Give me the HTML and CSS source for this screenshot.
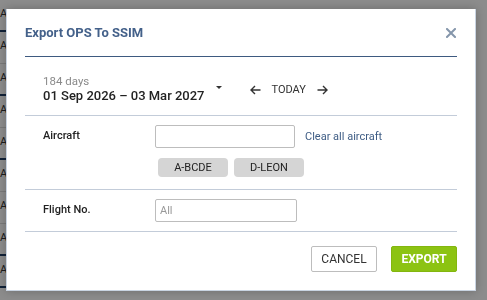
FILE: index.html
```html
<!DOCTYPE html>
<html lang="en">
<head>
    <meta charset="UTF-8">
    <meta name="viewport" content="width=device-width, initial-scale=1.0">
    <title>Export OPS To SSIM</title>
    <link rel="stylesheet" href="styles.css">
</head>
<body>

<!-- table behind the dialog -->
<div class="schedule">
    <div class="schedule-row dark">A</div>
    <div class="schedule-row">A</div>
    <div class="schedule-row dark">A</div>
    <div class="schedule-row">A</div>
    <div class="schedule-row dark">A</div>
    <div class="schedule-row">A</div>
    <div class="schedule-row">A</div>
    <div class="schedule-row dark">A</div>
    <div class="schedule-row dark">A</div>
</div>

<div class="overlay">
    <div class="modal">
        <div class="modal-header">
            <h2 class="modal-title">Export OPS To SSIM</h2>
            <button class="close-btn" type="button">
                <svg width="10" height="10" viewBox="0 0 10 10">
                    <path d="M1 1 L9 9 M9 1 L1 9" stroke="#8596ab" stroke-width="2" stroke-linecap="square"/>
                </svg>
            </button>
        </div>

        <!-- period -->
        <div class="period">
            <div class="period-range">
                <div class="period-days">184 days</div>
                <div class="period-dates">01 Sep 2026 – 03 Mar 2027</div>
            </div>
            <span class="caret"></span>
            <div class="period-nav">
                <svg width="11" height="10" viewBox="0 0 11 10">
                    <path d="M10.5 5 H1.2 M5 1 L1 5 L5 9" fill="none" stroke="#333" stroke-width="1.4"/>
                </svg>
                <span class="today">TODAY</span>
                <svg width="11" height="10" viewBox="0 0 11 10">
                    <path d="M0.5 5 H9.8 M6 1 L10 5 L6 9" fill="none" stroke="#333" stroke-width="1.4"/>
                </svg>
            </div>
        </div>

        <!-- aircraft -->
        <div class="field-row">
            <label class="field-label">Aircraft</label>
            <div class="field-body">
                <div class="field-line">
                    <input class="text-input aircraft-input" type="text">
                    <a class="clear-link" href="#">Clear all aircraft</a>
                </div>
                <div class="chips">
                    <span class="chip">A-BCDE</span>
                    <span class="chip">D-LEON</span>
                </div>
            </div>
        </div>

        <!-- flight number -->
        <div class="field-row">
            <label class="field-label">Flight No.</label>
            <div class="field-body">
                <input class="text-input flight-input" type="text" placeholder="All">
            </div>
        </div>

        <div class="modal-footer">
            <button class="btn btn-cancel" type="button">CANCEL</button>
            <button class="btn btn-export" type="button">EXPORT</button>
        </div>
    </div>
</div>

</body>
</html>
```

FILE: styles.css
```css
/* page */
body {
    margin: 0;
    font-family: Roboto, "Liberation Sans", sans-serif;
    background-color: white;
}

.schedule {
    width: 447px;
}

.schedule-row {
    height: 31px;
    line-height: 28px;
    font-size: 11px;
    color: #333;
    border-bottom: 1px solid #ddd;
    white-space: nowrap;
}

.schedule-row.dark {
    border-bottom: 2px solid #1d3c66;
    height: 30px;
}

/* dialog */
.overlay {
    position: fixed;
    top: 0;
    left: 0;
    right: 0;
    bottom: 0;
    background-color: rgba(0, 0, 0, 0.45);
    padding: 9px 0 0 6px;
}

.modal {
    width: 432px;
    padding: 0 18px;
    background-color: white;
    border: 1px solid #c9d4e2;
    border-top: none;
    box-shadow: 0px 0px 10px rgba(0, 0, 0, 0.25);
}

.modal-header {
    display: flex;
    justify-content: space-between;
    align-items: center;
    padding: 16px 0 15px;
    border-bottom: 1px solid #3e5a80;
}

.modal-title {
    margin: 0;
    font-size: 13px;
    line-height: 16px;
    font-weight: 700;
    color: #44618a;
}

.close-btn {
    border: none;
    background: none;
    padding: 0;
    margin-right: 1px;
    display: flex;
}

/* period */
.period {
    display: flex;
    align-items: center;
    padding: 17px 18px 11px;
    border-bottom: 1px solid #c3ccd9;
}

.period-days {
    font-size: 11.5px;
    line-height: 14px;
    color: #8a8a8a;
}

.period-dates {
    font-size: 13px;
    line-height: 16px;
    font-weight: 500;
    color: #222;
}

.caret {
    width: 0;
    height: 0;
    border-left: 3px solid transparent;
    border-right: 3px solid transparent;
    border-top: 3px solid #333;
    margin: 0 0 3px 11px;
}

.period-nav {
    display: flex;
    align-items: center;
    gap: 11px;
    margin-left: 28px;
    margin-top: 1px;
}

.today {
    font-size: 11px;
    color: #333;
}

/* fields */
.field-row {
    display: flex;
    padding: 9px 18px 9px;
    border-bottom: 1px solid #c3ccd9;
}

.field-row:nth-of-type(3) {
    padding-bottom: 12px;
}

.field-label {
    width: 112px;
    font-size: 11px;
    line-height: 22px;
    font-weight: 500;
    color: #222;
}

.field-line {
    display: flex;
    align-items: center;
    gap: 10px;
}

.text-input {
    height: 23px;
    padding: 0 4px;
    border: 1px solid #bdbdbd;
    border-radius: 2px;
    box-sizing: border-box;
    font-family: Roboto, "Liberation Sans", sans-serif;
    font-size: 11px;
    outline: none;
}

.text-input::placeholder {
    color: #999;
}

.aircraft-input {
    width: 140px;
}

.flight-input {
    width: 142px;
}

.clear-link {
    font-size: 11px;
    color: #3f5d85;
    text-decoration: none;
}

.chips {
    display: flex;
    gap: 6px;
    margin: 10px 0 0 3px;
}

.chip {
    width: 70px;
    height: 19px;
    line-height: 19px;
    text-align: center;
    font-size: 11px;
    color: #222;
    background-color: #d5d5d5;
    border-radius: 4px;
}

/* footer */
.modal-footer {
    display: flex;
    justify-content: flex-end;
    gap: 14px;
    padding: 14px 0 18px;
}

.btn {
    width: 66px;
    height: 26px;
    font-family: Roboto, "Liberation Sans", sans-serif;
    font-size: 12px;
    border-radius: 2px;
    cursor: pointer;
}

.btn-cancel {
    background-color: white;
    color: #333;
    border: 1px solid #bdbdbd;
}

.btn-export {
    background-color: #8cc312;
    color: white;
    font-weight: 700;
    border: 1px solid #83b60f;
}
```
